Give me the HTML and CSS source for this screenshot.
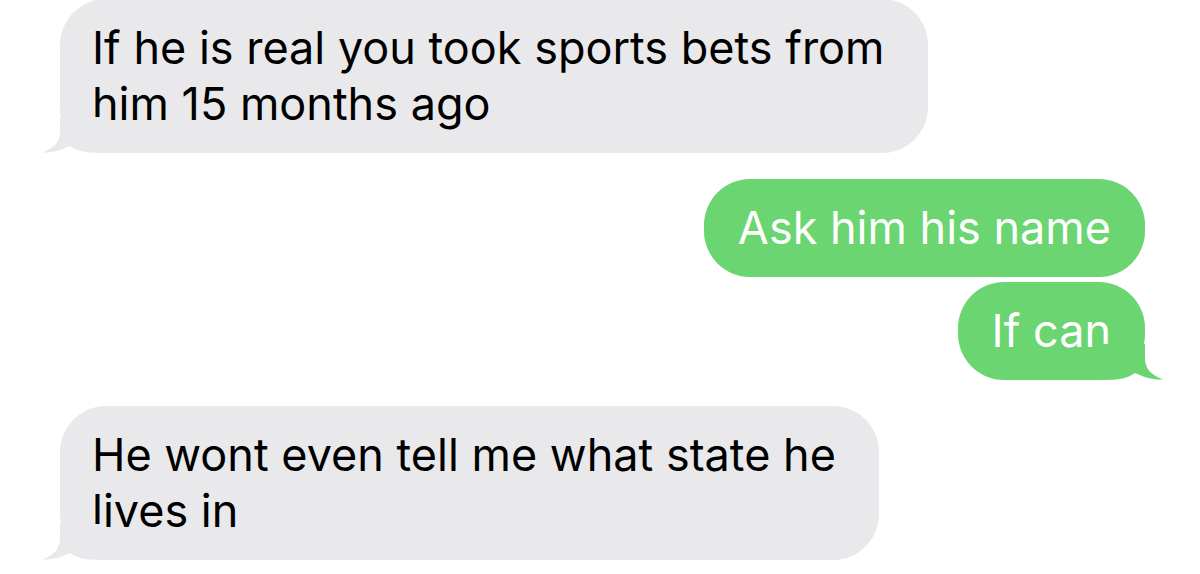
FILE: index.html
```html
<!DOCTYPE html>
<html lang="en">
<head>
<meta charset="utf-8">
<title>Messages</title>
<link rel="stylesheet" href="styles.css">
</head>
<body>
<main class="thread">
  <div class="row row-in">
    <div class="bubble bubble-in gap-after">If he is real you took sports bets from<br>him 15 months ago<svg class="tail tail-in" viewBox="0 0 60 36" width="60" height="36" aria-hidden="true"><path d="M18 0 L18 14 C18 25 12 31 0 35.5 C10 36 20 33 28 29 C34 33 40 36 60 36 L60 0 Z"/></svg></div>
  </div>
  <div class="row row-out">
    <div class="bubble bubble-out">Ask him his name</div>
  </div>
  <div class="row row-out">
    <div class="bubble bubble-out gap-after">If can<svg class="tail tail-out" viewBox="0 0 60 36" width="60" height="36" aria-hidden="true"><path d="M18 0 L18 14 C18 25 12 31 0 35.5 C10 36 20 33 28 29 C34 33 40 36 60 36 L60 0 Z"/></svg></div>
  </div>
  <div class="row row-in">
    <div class="bubble bubble-in">He wont even tell me what state he<br>lives in<svg class="tail tail-in" viewBox="0 0 60 36" width="60" height="36" aria-hidden="true"><path d="M18 0 L18 14 C18 25 12 31 0 35.5 C10 36 20 33 28 29 C34 33 40 36 60 36 L60 0 Z"/></svg></div>
  </div>
</main>
</body>
</html>
```
FILE: styles.css
```css
html, body {
  margin: 0;
  padding: 0;
  background: #ffffff;
}
body {
  width: 1200px;
  height: 574px;
  overflow: hidden;
  font-family: "Inter", "Roboto", "Liberation Sans", sans-serif;
}
.thread {
  display: flex;
  flex-direction: column;
  gap: 5px;
  padding: 0 55px 0 60px;
  margin-top: -1px;
}
.row {
  display: flex;
}
.row-in {
  justify-content: flex-start;
}
.row-out {
  justify-content: flex-end;
}
.bubble {
  position: relative;
  font-size: 45px;
  line-height: 56px;
  padding: 21px 34px;
  border-radius: 46px;
}
.gap-after {
  margin-bottom: 21px;
}
.bubble-in {
  background: #e9e9eb;
  color: #000000;
  padding-left: 32px;
  padding-right: 43px;
}
.bubble-out {
  background: #6bd572;
  color: #ffffff;
}
.tail {
  position: absolute;
  bottom: 0;
  display: block;
}
.tail-in {
  left: -18px;
  fill: #e9e9eb;
}
.tail-out {
  right: -18px;
  fill: #6bd572;
  transform: scaleX(-1);
}
```
